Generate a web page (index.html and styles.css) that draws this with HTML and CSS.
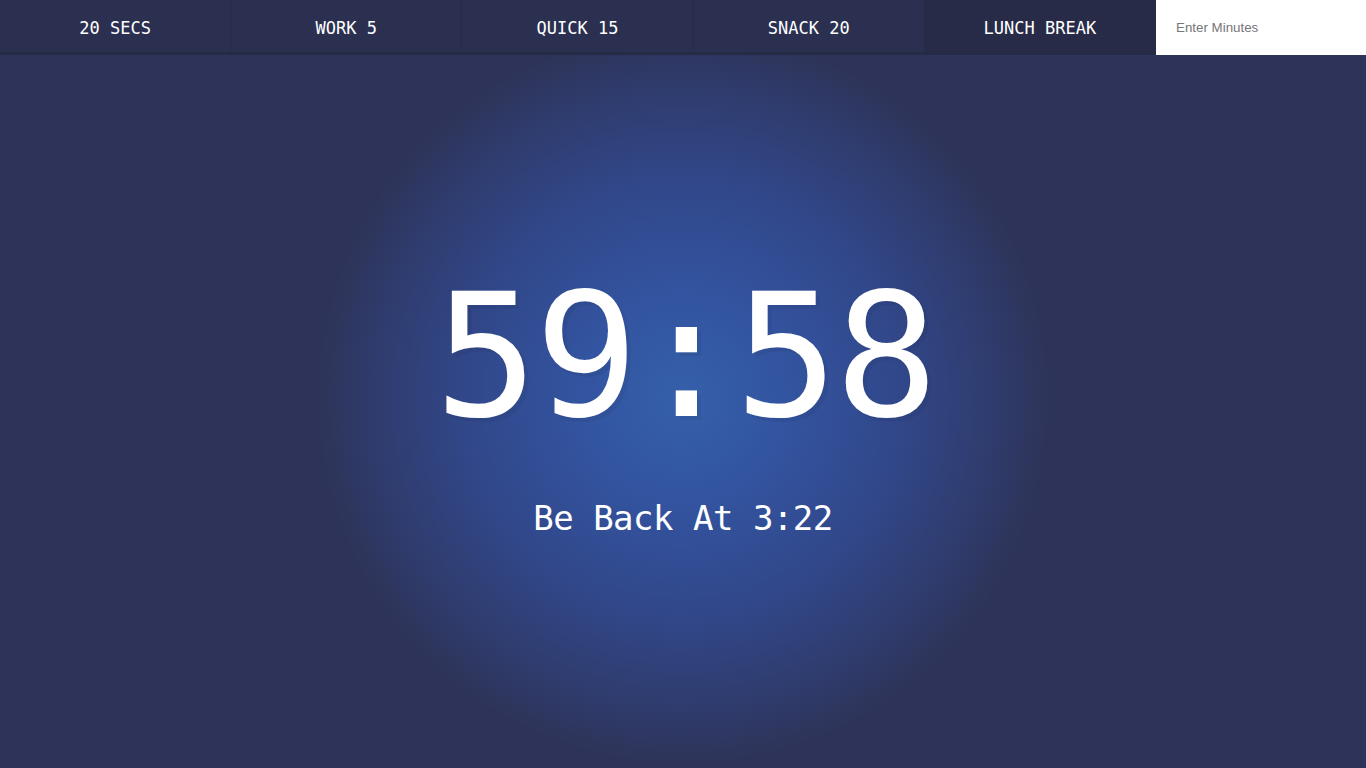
FILE: index.html
```html
<!DOCTYPE html>
<html>
<head>
<meta charset="utf-8">
<link rel="stylesheet" href="styles.css">
</head>
<body>
<div class="timer">
  <div class="timer__controls">
    <button class="timer__button">20 Secs</button>
    <button class="timer__button">Work 5</button>
    <button class="timer__button">Quick 15</button>
    <button class="timer__button">Snack 20</button>
    <button class="timer__button timer__button--active">Lunch Break</button>
    <form class="timer__form">
      <input type="text" name="minutes" placeholder="Enter Minutes">
    </form>
  </div>
  <div class="display">
    <h1 class="display__time-left">59:58</h1>
    <p class="display__end-time">Be Back At 3:22</p>
  </div>
</div>
</body>
</html>
```
FILE: styles.css
```css
html, body {
  margin: 0;
  padding: 0;
  height: 100%;
}
body {
  background: radial-gradient(circle 365px at 683px 398px, #3560aa 0%, #3354a0 28%, #314789 60%, #2f3c6e 84%, #2e3459 100%);
  background-color: #2e3459;
  font-family: "DejaVu Sans Mono", monospace;
}
.timer {
  display: flex;
  flex-direction: column;
  min-height: 100vh;
}
.timer__controls {
  display: flex;
  height: 55px;
}
.timer__button {
  flex: 1;
  background: #2b3051;
  border: 0;
  border-bottom: 3px solid #252a45;
  border-right: 1px solid #262b48;
  color: #fff;
  font-family: "DejaVu Sans Mono", monospace;
  font-size: 17px;
  text-transform: uppercase;
  padding: 3px 0 0;
  cursor: pointer;
}
.timer__button--active {
  background: #272b48;
}
.timer__form {
  width: 210px;
  display: flex;
  margin: 0;
}
.timer__form input {
  flex: 1;
  width: 100%;
  border: 0;
  margin: 0;
  padding: 0 20px;
  background: #fff;
  font-family: "Liberation Sans", Arial, sans-serif;
  font-size: 13.33px;
  color: #333;
  outline: none;
}
.timer__form input::placeholder {
  color: #767676;
}
.display {
  flex: 1;
  display: flex;
  flex-direction: column;
  align-items: center;
  justify-content: center;
  padding-bottom: 18px;
}
.display__time-left {
  margin: 0;
  font-family: "DejaVu Sans Mono", monospace;
  font-weight: normal;
  font-size: 172px;
  line-height: 1;
  letter-spacing: -3.5px;
  margin-right: -3.5px;
  color: #fff;
  text-shadow: 4px 4px 0 rgba(0, 0, 0, 0.05);
}
.display__end-time {
  margin: 58px 0 0;
  font-size: 34px;
  line-height: 1;
  letter-spacing: -0.5px;
  color: #fff;
}
```
